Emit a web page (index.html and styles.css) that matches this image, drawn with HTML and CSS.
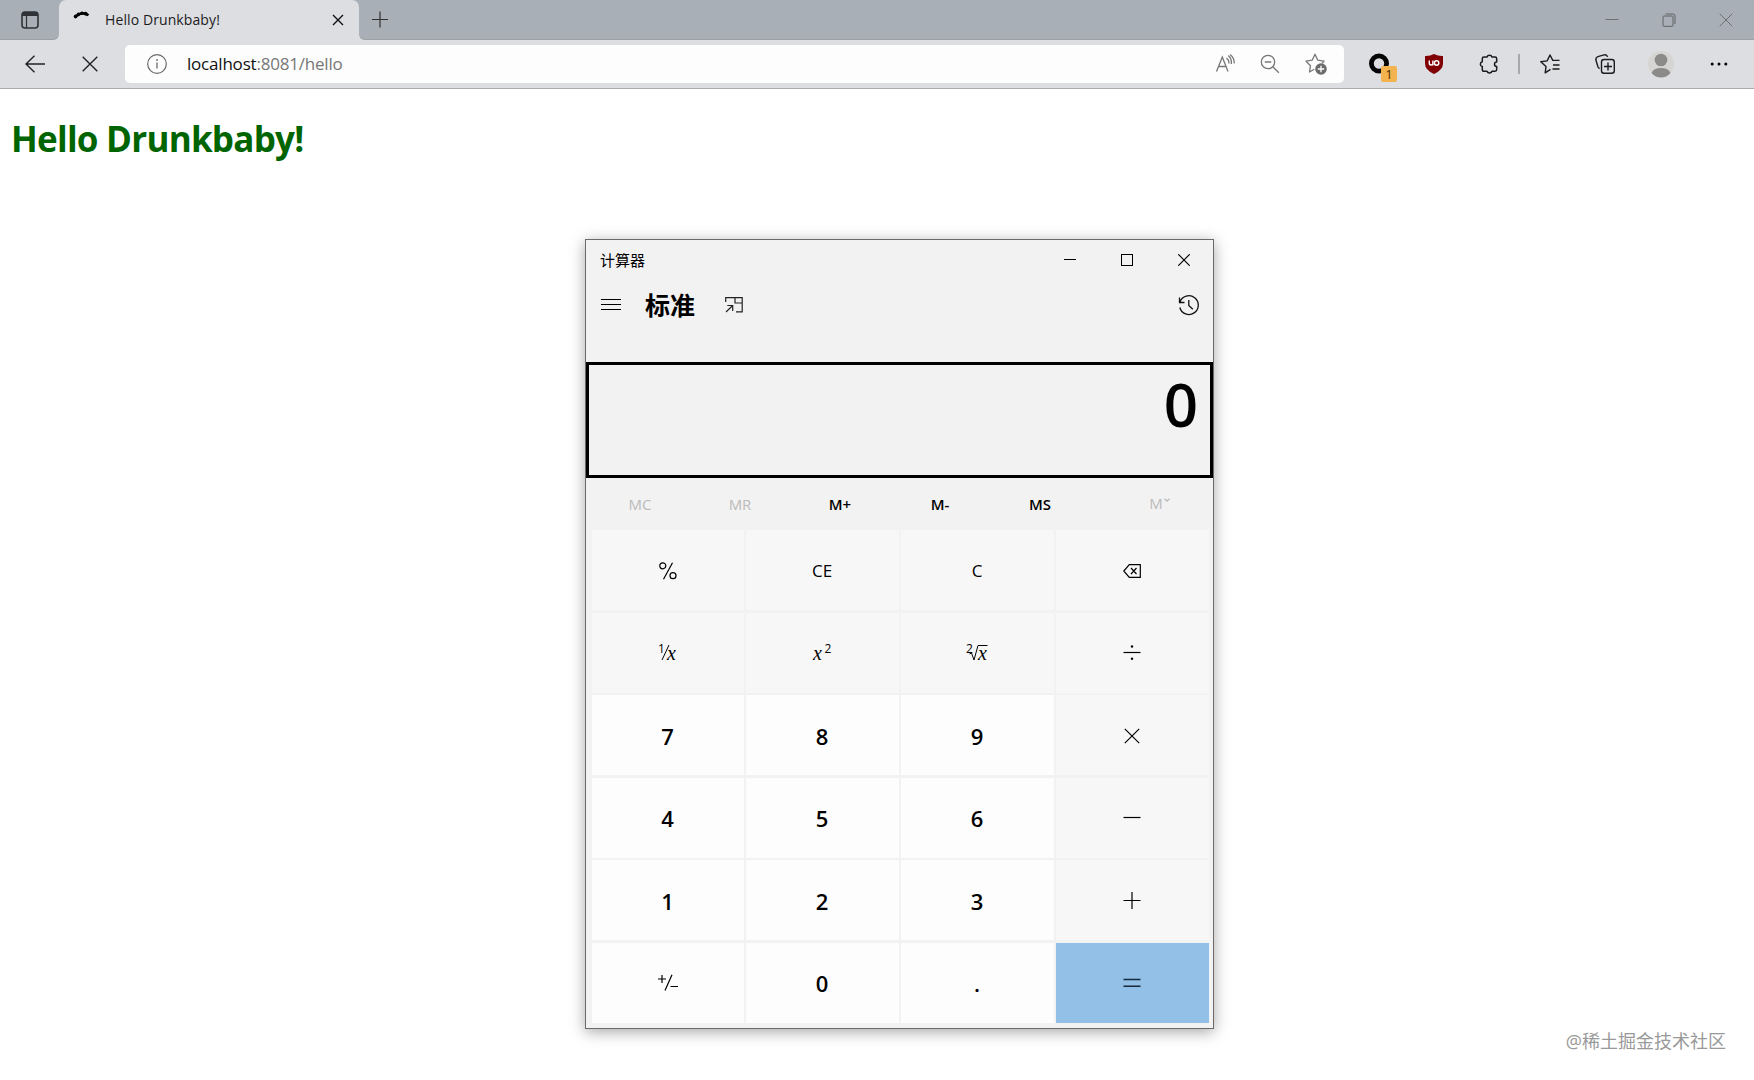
FILE: index.html
```
<!DOCTYPE html>
<html lang="zh-CN">
<head>
  <meta charset="UTF-8">
  <title>Hello Drunkbaby!</title>
  <meta name="viewport" content="width=device-width, initial-scale=1">
  <link rel="stylesheet" href="styles.css">
</head>
<body>

<header class="browser">
  <div class="tabstrip">
    <div class="tab-menu">
      <svg width="18" height="18" viewBox="0 0 18 18"><rect x="1" y="1" width="16" height="16" rx="3" fill="none" stroke="#2f3337" stroke-width="1.6"/><path d="M1 5V4a3 3 0 0 1 3-3h10a3 3 0 0 1 3 3v1z" fill="#2f3337"/><path d="M5.5 5v12" stroke="#2f3337" stroke-width="1.2"/></svg>
    </div>
    <div class="tab">
      <svg class="spinner" width="18" height="18" viewBox="0 0 18 18"><path d="M2.500 5.500Q9 -.500 15.500 4.300" fill="none" stroke="#000" stroke-width="3.600" stroke-linecap="round" stroke-dasharray="0.1 3.600"/><path d="M2.500 5.500Q9 -.500 15.500 4.300" fill="none" stroke="#000" stroke-width="2.400"/></svg>
      <span class="tab-title">Hello Drunkbaby!</span>
      <svg class="tab-close" width="12" height="12" viewBox="0 0 12 12"><path d="M1 1l10 10M11 1L1 11" stroke="#111" stroke-width="1.4"/></svg>
    </div>
    <svg class="new-tab" width="18" height="18" viewBox="0 0 18 18"><path d="M9 .5v17M.5 9h17" stroke="#333" stroke-width="1.3"/></svg>
    <div class="window-buttons">
      <span><svg width="14" height="14" viewBox="0 0 14 14"><path d="M.5 6.500h13" stroke="#6c7074"/></svg></span>
      <span><svg width="14" height="14" viewBox="0 0 14 14"><rect x="1" y="3" width="10" height="10.3" rx="1" fill="none" stroke="#5f6367"/><path d="M3.5 1h7.5a2 2 0 0 1 2 2v8" fill="none" stroke="#5f6367"/></svg></span>
      <span><svg width="14" height="14" viewBox="0 0 14 14"><path d="M.7.7l12.6 12.6M13.3.7L.7 13.3" stroke="#6c7074"/></svg></span>
    </div>
  </div>

  <div class="toolbar">
    <div class="nav">
      <svg width="20" height="18" viewBox="0 0 20 18"><path d="M20 9H1M9.5.7L1 9l8.5 8.3" fill="none" stroke="#222" stroke-width="1.4"/></svg>
      <svg width="16" height="16" viewBox="0 0 16 16"><path d="M.7.7l14.6 14.6M15.3.7L.7 15.3" stroke="#222" stroke-width="1.4"/></svg>
    </div>
    <div class="address">
      <svg class="info" width="20" height="20" viewBox="0 0 20 20"><circle cx="10" cy="10" r="9.3" fill="none" stroke="#6b6b6b" stroke-width="1.2"/><path d="M10 8.5v6" stroke="#6b6b6b" stroke-width="1.3"/><circle cx="10" cy="6" r=".9" fill="#6b6b6b"/></svg>
      <span class="url">localhost<span>:8081/hello</span></span>
      <div class="address-icons">
        <svg width="20" height="20" viewBox="0 0 20 20" fill="none" stroke="#777" stroke-width="1.3"><path d="M1.5 17.500L7.300 3 13 17.500M3.500 12.500h7.500M11.500 4q2.800 2.200 2.400 5.500M13.300 1.500q3.700 3 3 8.500M15.200.5q4.400 3.800 4 9"/></svg>
        <svg width="20" height="20" viewBox="0 0 20 20" fill="none" stroke="#777" stroke-width="1.3"><circle cx="8" cy="8" r="6.7"/><path d="M4.8 8h6.4M12.8 12.8l6 6"/></svg>
        <svg width="22" height="22" viewBox="0 0 22 22"><path d="M9.2 16.3L4.5 19l1-6.3L1 8.2l6.2-1L10 1.3l2.8 5.9 6.2 1-2 2" fill="none" stroke="#777" stroke-width="1.3" stroke-linejoin="round"/><circle cx="16" cy="16" r="5.8" fill="#6b6b6b"/><path d="M16 12.8v6.4M12.8 16h6.4" stroke="#fff" stroke-width="1.3"/></svg>
      </div>
    </div>
    <div class="extensions">
      <div class="ext">
        <svg width="22" height="22" viewBox="0 0 22 22"><circle cx="11" cy="10.5" r="7.6" fill="none" stroke="#050505" stroke-width="4.8"/></svg>
        <b class="badge">1</b>
      </div>
      <div class="ext">
        <svg width="18" height="20" viewBox="0 0 18 20"><path d="M9 0q4 2.2 9 2v7.5Q18 16 9 20 0 16 0 9.500V2q5 .2 9-2z" fill="#800004"/><path d="M4.300 6.500v2.700a1.800 1.800 0 0 0 3.600 0V6.500v5" fill="none" stroke="#fff" stroke-width="1.400"/><circle cx="11.600" cy="9" r="2.200" fill="none" stroke="#fff" stroke-width="1.500"/></svg>
      </div>
      <div class="ext">
        <svg width="20" height="20" viewBox="0 0 20 20"><path d="M5 3h3a2.600 2.300 0 0 1 5 0h3q1.700 0 1.700 1.700V8a2.200 2.200 0 0 0 0 4.400v3.200q0 1.700-1.700 1.700h-3a2.600 2.300 0 0 1-5 0H5q-1.700 0-1.700-1.700v-3a2.400 2.500 0 0 1 0-4.900v-3Q3.300 3 5 3z" fill="none" stroke="#1b1b1b" stroke-width="1.500" stroke-linejoin="round"/></svg>
      </div>
      <i class="divider"></i>
      <div class="ext">
        <svg width="20" height="20" viewBox="0 0 20 20" fill="none" stroke="#1b1b1b" stroke-width="1.400" stroke-linejoin="round"><path d="M10.500 15.300L5.200 18.800l.8-6.200L.8 7.800l6.300-.9L10 1l2.800 5.400h6.700M13 11h6.500M12.500 15h7"/></svg>
      </div>
      <div class="ext">
        <svg width="20" height="20" viewBox="0 0 20 20" fill="none" stroke="#1b1b1b" stroke-width="1.400"><path d="M4.700 14.500a3 3 0 0 1-2-2.500L.9 6a3 3 0 0 1 2-3.300L9 .9a3 3 0 0 1 3.600 2"/><rect x="6.500" y="5.500" width="12.800" height="13.700" rx="2.500"/><path d="M13 8.500v8M9 12.500h8"/></svg>
      </div>
      <div class="ext ext-wide">
        <svg width="28" height="28" viewBox="0 0 28 28"><circle cx="14" cy="14" r="13" fill="#d7d5d3"/><circle cx="14" cy="10" r="6.300" fill="#8b8a89"/><path d="M4.500 23q2-5 9.500-5t9.500 5q-4 4.500-9.500 4.500T4.500 23z" fill="#8b8a89"/></svg>
      </div>
      <div class="ext ext-wide">
        <svg width="18" height="4" viewBox="0 0 18 4"><circle cx="2.200" cy="2" r="1.500"/><circle cx="9" cy="2" r="1.500"/><circle cx="15.800" cy="2" r="1.500"/></svg>
      </div>
    </div>
  </div>
</header>

<main>
  <h1>Hello Drunkbaby!</h1>
</main>

<section class="calculator">
  <div class="calc-title">
    <span>计算器</span>
    <div class="calc-buttons">
      <span><svg width="12" height="12" viewBox="0 0 12 12"><path d="M0 5.500h12" stroke="#000"/></svg></span>
      <span><svg width="12" height="12" viewBox="0 0 12 12"><rect x=".5" y=".5" width="11" height="11" fill="none" stroke="#000"/></svg></span>
      <span><svg width="12" height="12" viewBox="0 0 12 12"><path d="M.3.3l11.400 11.400M11.700.3L.3 11.700" stroke="#000" stroke-width="1.200"/></svg></span>
    </div>
  </div>

  <div class="calc-mode">
    <svg width="20" height="12" viewBox="0 0 20 12"><path d="M0 .5h20M0 5.500h20M0 10.500h20" stroke="#000"/></svg>
    <h2>标准</h2>
    <svg width="18" height="16" viewBox="0 0 18 16" fill="none" stroke="#222" stroke-width="1.200"><path d="M.7 5V.7h16.500v14.200H11M10 .7V6h7M1 15l6.700-6.500M2.300 8.500h5.400V14"/></svg>
    <svg class="history" width="22" height="22" viewBox="0 0 22 22" fill="none" stroke="#111" stroke-width="1.300"><path d="M2 8a9.400 9.400 0 1 1-.2 5.500M1.500 3.500v5h5M10.800 6v5.500l4 3.800"/></svg>
  </div>

  <div class="display">0</div>

  <div class="memory">
    <span class="off">MC</span>
    <span class="off">MR</span>
    <span>M+</span>
    <span>M-</span>
    <span>MS</span>
    <span class="off last">M<svg width="6" height="4" viewBox="0 0 6 4"><path d="M.5.700L3 3 5.500.700" fill="none" stroke="#bbb" stroke-width="1.300"/></svg></span>
  </div>

  <div class="keys">
    <div class="key"><svg width="18" height="18" viewBox="0 0 18 18" fill="none" stroke="#000" stroke-width="1.200"><circle cx="3.800" cy="3.800" r="3"/><circle cx="14" cy="13.700" r="3"/><path d="M13.500.700L4.500 17.300"/></svg></div>
    <div class="key">CE</div>
    <div class="key">C</div>
    <div class="key"><svg width="18" height="14" viewBox="0 0 18 14" fill="none" stroke="#000" stroke-width="1.200"><path d="M6.300.700h11v12.600h-11L.8 7zM8 4l5.500 6M13.500 4L8 10"/></svg></div>

    <div class="key"><svg width="30" height="30" viewBox="0 0 30 30"><text class="num" x="5" y="15">1</text><path d="M16 7L9 22" stroke="#000"/><text class="var" x="14" y="22">x</text></svg></div>
    <div class="key"><svg width="30" height="30" viewBox="0 0 30 30"><text class="var" x="6" y="22">x</text><text class="num" x="17.500" y="15">2</text></svg></div>
    <div class="key"><svg width="30" height="30" viewBox="0 0 30 30"><text class="num" x="4" y="15">2</text><path d="M7.500 16l2-1 2.500 7 4-14.500h9.500" fill="none" stroke="#000"/><text class="var" x="16" y="22">x</text></svg></div>
    <div class="key"><svg width="18" height="18" viewBox="0 0 18 18"><path d="M.5 8.500h17" stroke="#000" stroke-width="1.200"/><circle cx="9" cy="2.500" r="1.200"/><circle cx="9" cy="14.800" r="1.200"/></svg></div>

    <div class="key digit">7</div>
    <div class="key digit">8</div>
    <div class="key digit">9</div>
    <div class="key"><svg width="16" height="16" viewBox="0 0 16 16"><path d="M.8.800l14.400 14.400M15.200.800L.8 15.200" stroke="#000" stroke-width="1.200"/></svg></div>

    <div class="key digit">4</div>
    <div class="key digit">5</div>
    <div class="key digit">6</div>
    <div class="key"><svg width="18" height="18" viewBox="0 0 18 18"><path d="M.5 8.500h17" stroke="#000" stroke-width="1.200"/></svg></div>

    <div class="key digit">1</div>
    <div class="key digit">2</div>
    <div class="key digit">3</div>
    <div class="key"><svg width="18" height="18" viewBox="0 0 18 18"><path d="M.5 8.500h17M9 0v17" stroke="#000" stroke-width="1.200"/></svg></div>

    <div class="key digit"><svg width="22" height="18" viewBox="0 0 22 18"><path d="M1 5h8M5 1v8M15 .700L8 16.500M13.500 12.500H21" fill="none" stroke="#000" stroke-width="1.200"/></svg></div>
    <div class="key digit">0</div>
    <div class="key digit">.</div>
    <div class="key equals"><svg width="18" height="10" viewBox="0 0 18 10"><path d="M.5 1.500h17M.5 8.300h17" stroke="#17293a" stroke-width="1.400"/></svg></div>
  </div>
</section>

<div class="watermark">@稀土掘金技术社区</div>

</body>
</html>
```
FILE: styles.css
```
* {
  box-sizing: border-box;
}

body {
  margin: 0;
  height: 1080px;
  background: #fff;
  font-family: 'Open Sans', 'Noto Sans', 'Noto Sans CJK SC', sans-serif;
  overflow: hidden;
}

svg {
  display: block;
  flex: none;
}

/* browser chrome */
.browser {
  height: 89px;
  background: #dcdee2;
  border-bottom: 1px solid #a9abad;
}

.tabstrip {
  display: flex;
  align-items: center;
  height: 40px;
  background: linear-gradient(#a9afb6 20px, #dcdee2 20px);
}

.tab-menu {
  display: flex;
  align-items: center;
  width: 59px;
  height: 40px;
  padding-left: 21px;
  background: #a9afb6;
  border-bottom: 1px solid #9ba0a5;
  border-bottom-right-radius: 6px;
}

.tab {
  display: flex;
  align-items: center;
  width: 300px;
  height: 40px;
  padding: 0 15px 0 14px;
  background: #dcdee2;
  border-radius: 7px 7px 0 0;
}

.tab-title {
  margin-left: 14px;
  padding-bottom: 2px;
  font-size: 14px;
  letter-spacing: 0.1px;
  color: #1c1c1c;
}

.tab-close {
  margin-left: auto;
}

.new-tab {
  width: 42px;
  height: 40px;
  padding: 11px 12px;
  background: #a9afb6;
  border-bottom: 1px solid #9ba0a5;
  border-bottom-left-radius: 6px;
}

.window-buttons {
  display: flex;
  flex: 1;
  justify-content: flex-end;
  align-items: center;
  height: 40px;
  background: #a9afb6;
  border-bottom: 1px solid #9ba0a5;
}

.window-buttons span {
  display: flex;
  justify-content: center;
  width: 57px;
}

.toolbar {
  display: flex;
  align-items: center;
  height: 47px;
}

.nav {
  display: flex;
  align-items: center;
  justify-content: space-between;
  width: 125px;
  padding: 0 27px 0 25px;
}

.address {
  display: flex;
  align-items: center;
  width: 1219px;
  height: 38px;
  padding: 0 17px 0 22px;
  background: #fdfdfd;
  border-radius: 5px;
}

.url {
  margin-left: 20px;
  font-size: 17px;
  letter-spacing: -0.2px;
  color: #111;
}

.url span {
  color: #777;
}

.address-icons {
  display: flex;
  align-items: center;
  gap: 25px;
  margin-left: auto;
}

.extensions {
  display: flex;
  align-items: center;
  margin-left: 7px;
}

.ext {
  position: relative;
  display: flex;
  justify-content: center;
  width: 55px;
}

.ext-wide {
  width: 58px;
}

.badge {
  position: absolute;
  left: 30px;
  top: 13px;
  width: 16px;
  height: 16px;
  border-radius: 2px;
  background: #f3b34f;
  color: #4a2d00;
  font-size: 13px;
  font-weight: 400;
  line-height: 16px;
  text-align: center;
}

.divider {
  width: 2px;
  height: 20px;
  margin: 0 2px;
  background: #a6a8ab;
}

/* page */
h1 {
  margin: 27px 0 0 11px;
  font-size: 35px;
  line-height: 46px;
  letter-spacing: -0.75px;
  color: #006400;
}

/* calculator window */
.calculator {
  position: absolute;
  left: 585px;
  top: 239px;
  width: 629px;
  height: 790px;
  background: #f2f2f2;
  border: 1px solid #6a6a6a;
  box-shadow: 0 3px 14px rgba(0, 0, 0, 0.35);
}

.calc-title {
  display: flex;
  align-items: center;
  justify-content: space-between;
  height: 40px;
  padding: 0 1px 0 14px;
  font-size: 15px;
}

.calc-title > span {
  padding-bottom: 2px;
}

.calc-buttons {
  display: flex;
}

.calc-buttons span {
  display: flex;
  justify-content: center;
  width: 57px;
}

.calc-mode {
  display: flex;
  align-items: center;
  height: 50px;
  margin-bottom: 32px;
  padding: 0 13px 0 15px;
}

.calc-mode h2 {
  margin: 0 29px 0 24px;
  padding-right: 1px;
  font-size: 25px;
  line-height: 36px;
}

.history {
  margin-left: auto;
}

.display {
  height: 116px;
  padding-right: 12px;
  border: 3px solid #000;
  font-size: 60px;
  font-weight: 600;
  line-height: 78px;
  text-align: right;
}

.memory {
  display: flex;
  align-items: center;
  height: 52px;
  padding-left: 4px;
  font-size: 15px;
  font-weight: 600;
}

.memory span {
  flex: none;
  width: 100px;
  text-align: center;
}

.memory .off {
  color: #bbb;
  font-weight: 500;
}

.memory .last {
  display: flex;
  justify-content: center;
  width: 123px;
  padding: 0 0 2px 16px;
}

.last svg {
  margin: 5px 0 0 1px;
}

.keys {
  display: grid;
  grid-template-columns: 152px repeat(3, 153px);
  grid-auto-rows: 80px;
  gap: 2.500px 2px;
  padding-left: 6px;
}

.key {
  display: flex;
  align-items: center;
  justify-content: center;
  padding: 1px 1px 0 0;
  background: #f7f7f7;
  font-size: 17px;
}

.digit {
  background: #fdfdfd;
  font-size: 22px;
  font-weight: 600;
}

.equals {
  background: #92c0e6;
}

.num {
  font-size: 12px;
}

.var {
  font-family: 'Liberation Serif', serif;
  font-size: 20px;
  font-style: italic;
}

.watermark {
  position: absolute;
  right: 28px;
  bottom: 26px;
  font-size: 18px;
  line-height: 26px;
  color: #999;
}
```
